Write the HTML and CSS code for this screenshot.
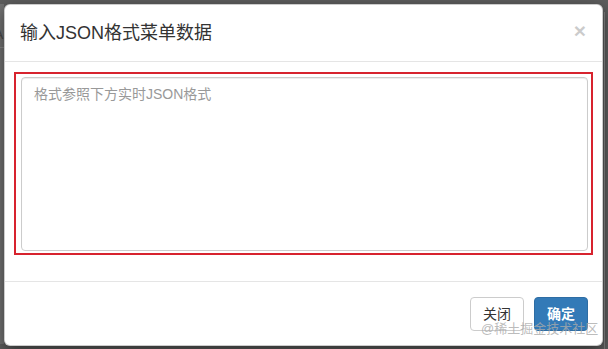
FILE: index.html
```html
<!DOCTYPE html>
<html lang="zh">
<head>
<meta charset="utf-8">
<link rel="stylesheet" href="styles.css">
</head>
<body>
<div class="page">
  <div class="side-left"><div class="side-head">A</div></div>
  <div class="modal">
    <div class="modal-header">
      <h4 class="modal-title">输入JSON格式菜单数据</h4>
      <span class="close">×</span>
    </div>
    <div class="modal-body">
      <div class="highlight">
        <textarea class="json-input" placeholder="格式参照下方实时JSON格式"></textarea>
      </div>
    </div>
    <div class="modal-footer">
      <button class="btn btn-default">关闭</button>
      <button class="btn btn-primary">确定</button>
    </div>
  </div>
  <div class="side-right"></div>
</div>
<div class="watermark">@稀土掘金技术社区</div>
</body>
</html>
```

FILE: styles.css
```css
html, body {
  margin: 0;
  padding: 0;
}
body {
  width: 608px;
  height: 349px;
  overflow: hidden;
  background: #5d5d5d;
  font-family: "Liberation Sans", "Noto Sans CJK SC", sans-serif;
  color: #333;
  position: relative;
}
.page {
  display: flex;
  align-items: flex-start;
  padding-top: 4px;
}
.side-left {
  width: 4px;
  height: 340px;
  background: #737373;
  overflow: hidden;
  flex: none;
}
.side-head {
  height: 43px;
  border-bottom: 1px solid #8a8a8a;
  color: #4a4a4a;
  font-size: 14px;
  line-height: 60px;
  text-indent: -6px;
}
.modal {
  width: 599px;
  flex: none;
  box-sizing: border-box;
  background: #fff;
  border: 1px solid rgba(0, 0, 0, 0.2);
  border-radius: 6px;
  box-shadow: 0 5px 15px rgba(0, 0, 0, 0.5);
  overflow: hidden;
}
.side-right {
  flex: 1;
  height: 345px;
  border-left: 1px solid #6c6c6c;
  margin-left: 1px;
  margin-top: 8px;
}
.modal-header {
  display: flex;
  justify-content: space-between;
  align-items: center;
  padding: 15px;
  border-bottom: 1px solid #e5e5e5;
}
.modal-title {
  margin: 0;
  font-size: 18px;
  font-weight: normal;
  line-height: 26px;
  color: #333;
}
.close {
  font-size: 21px;
  font-weight: bold;
  line-height: 1;
  color: #000;
  opacity: 0.2;
  margin-top: -6px;
  margin-right: 1px;
}
.modal-body {
  padding: 10px 9px 26px;
}
.highlight {
  border: 2px solid #d7232e;
  padding: 3px 3px 2px 5px;
}
.json-input {
  display: block;
  width: 100%;
  height: 174px;
  box-sizing: border-box;
  margin: 0;
  padding: 6px 12px;
  border: 1px solid #ccc;
  border-radius: 4px;
  box-shadow: inset 0 1px 1px rgba(0, 0, 0, 0.075);
  font-family: "Liberation Sans", "Noto Sans CJK SC", sans-serif;
  font-size: 14px;
  line-height: 20px;
  color: #555;
  resize: none;
  outline: none;
}
.json-input::placeholder {
  color: #999;
}
.modal-footer {
  display: flex;
  justify-content: flex-end;
  gap: 10px;
  padding: 15px 14px 14px 15px;
  border-top: 1px solid #e5e5e5;
}
.btn {
  height: 34px;
  padding: 6px 12px;
  box-sizing: border-box;
  border: 1px solid transparent;
  border-radius: 4px;
  font-family: "Liberation Sans", "Noto Sans CJK SC", sans-serif;
  font-size: 14px;
  line-height: 20px;
}
.btn-default {
  background: #fff;
  border-color: #ccc;
  color: #333;
}
.btn-primary {
  background: #337ab7;
  border-color: #2e6da4;
  color: #fff;
  font-weight: bold;
}
.watermark {
  position: absolute;
  left: 481px;
  top: 320px;
  font-size: 13px;
  line-height: 18px;
  color: rgba(170, 170, 170, 0.8);
  white-space: nowrap;
}
```
